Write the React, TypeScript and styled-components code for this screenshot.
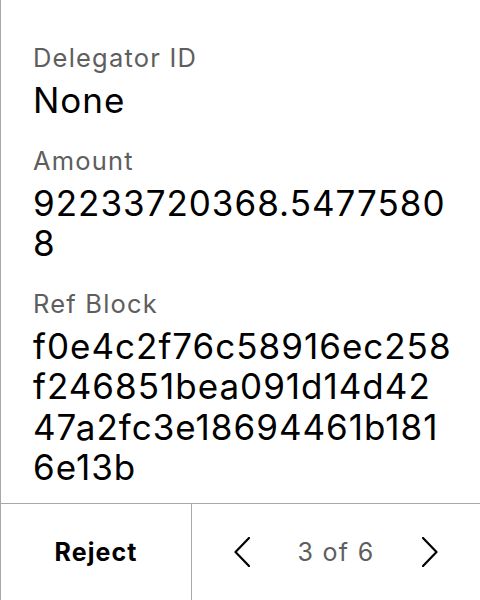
import styled, { createGlobalStyle } from 'styled-components';

const GlobalStyle = createGlobalStyle`
  html, body {
    margin: 0;
    padding: 0;
    background: #ffffff;
  }
  body {
    font-family: Inter, "Noto Sans", "Liberation Sans", sans-serif;
    color: #000000;
  }
`;

const Screen = styled.div`
  width: 480px;
  height: 600px;
  box-sizing: border-box;
  border-left: 1px solid #a8a8a8;
  display: flex;
  flex-direction: column;
  overflow: hidden;
`;

const Fields = styled.div`
  flex: 1;
  padding: 43px 28px 0 32px;
  display: flex;
  flex-direction: column;
  gap: 25px;
`;

const Field = styled.div`
  display: flex;
  flex-direction: column;
  gap: 7px;
`;

const Label = styled.div`
  font-size: 25.5px;
  line-height: 30px;
  letter-spacing: 1.2px;
  color: #5e5e5e;
`;

const Value = styled.div`
  font-size: 35px;
  line-height: 40.5px;
  letter-spacing: 1px;
  color: #000000;
  word-break: break-all;
`;

const Footer = styled.div`
  height: 96px;
  flex-shrink: 0;
  border-top: 1px solid #a8a8a8;
  display: grid;
  grid-template-columns: 191px 1fr;
`;

const RejectButton = styled.button`
  border: none;
  border-right: 1px solid #a8a8a8;
  background: transparent;
  font-family: inherit;
  font-size: 25px;
  font-weight: 700;
  letter-spacing: 1.1px;
  color: #000000;
  cursor: pointer;
  padding: 0;
`;

const Pager = styled.div`
  display: flex;
  align-items: center;
  justify-content: center;
  gap: 47px;
`;

const PageCount = styled.span`
  font-size: 25px;
  letter-spacing: 1.3px;
  color: #5e5e5e;
`;

const ArrowButton = styled.button`
  border: none;
  background: transparent;
  padding: 0;
  width: 16px;
  height: 32px;
  display: flex;
  align-items: center;
  justify-content: center;
  cursor: pointer;
`;

function Chevron({ dir }: { dir: 'left' | 'right' }) {
  const d = dir === 'left' ? 'M15 1 L1.5 15 L15 29' : 'M1 1 L14.5 15 L1 29';
  return (
    <svg width="16" height="30" viewBox="0 0 16 30" fill="none">
      <path d={d} stroke="#000" strokeWidth="2.2" strokeLinecap="round" strokeLinejoin="round" />
    </svg>
  );
}

const fields = [
  { label: 'Delegator ID', value: 'None' },
  { label: 'Amount', value: '92233720368.54775808' },
  { label: 'Ref Block', value: 'f0e4c2f76c58916ec258f246851bea091d14d4247a2fc3e18694461b1816e13b' },
];

export default function App() {
  return (
    <>
      <GlobalStyle />
      <Screen>
        <Fields>
          {fields.map(f => (
            <Field key={f.label}>
              <Label>{f.label}</Label>
              <Value>{f.value}</Value>
            </Field>
          ))}
        </Fields>
        <Footer>
          <RejectButton>Reject</RejectButton>
          <Pager>
            <ArrowButton aria-label="Previous"><Chevron dir="left" /></ArrowButton>
            <PageCount>3 of 6</PageCount>
            <ArrowButton aria-label="Next"><Chevron dir="right" /></ArrowButton>
          </Pager>
        </Footer>
      </Screen>
    </>
  );
}
